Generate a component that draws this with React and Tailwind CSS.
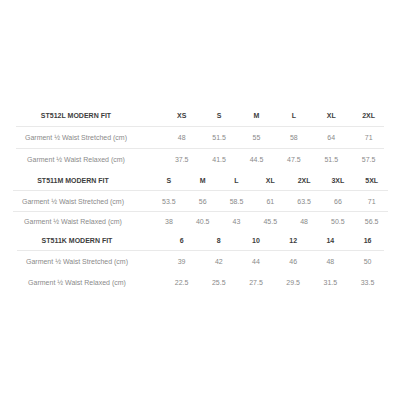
import React from "react";

const tables = [
  {
    left: 16,
    width: 368,
    start: 147,
    col: 37.4,
    cols: "grid-cols-[repeat(6,37.4px)]",
    title: "ST512L MODERN FIT",
    sizes: ["XS", "S", "M", "L", "XL", "2XL"],
    rows: [
      ["Garment ½ Waist Stretched (cm)", ["48", "51.5", "55", "58", "64", "71"]],
      ["Garment ½ Waist Relaxed (cm)", ["37.5", "41.5", "44.5", "47.5", "51.5", "57.5"]],
    ],
    heights: ["h-[22px]", "h-[22px]", "h-[21px]"],
    lines: [true, true, false],
  },
  {
    left: 13,
    width: 375,
    start: 139,
    title: "ST511M MODERN FIT",
    cols: "grid-cols-[repeat(7,33.8px)]",
    sizes: ["S", "M", "L", "XL", "2XL", "3XL", "5XL"],
    rows: [
      ["Garment ½ Waist Stretched (cm)", ["53.5", "56", "58.5", "61", "63.5", "66", "71"]],
      ["Garment ½ Waist Relaxed (cm)", ["38", "40.5", "43", "45.5", "48", "50.5", "56.5"]],
    ],
    heights: ["h-[21px]", "h-[21px]", "h-[19px]"],
    lines: [true, true, false],
  },
  {
    left: 17,
    width: 367,
    start: 146,
    title: "ST511K MODERN FIT",
    cols: "grid-cols-[repeat(6,37.2px)]",
    sizes: ["6", "8", "10", "12", "14", "16"],
    rows: [
      ["Garment ½ Waist Stretched (cm)", ["39", "42", "44", "46", "48", "50"]],
      ["Garment ½ Waist Relaxed (cm)", ["22.5", "25.5", "27.5", "29.5", "31.5", "33.5"]],
    ],
    heights: ["h-[20px]", "h-[21px]", "h-[21px]"],
    lines: [true, false, false],
  },
];

function Row({ t, i, label, values, bold }) {
  return (
    <div
      className={`flex items-center ${t.heights[i]} ${t.lines[i] ? "border-b border-[#e9e9e9]" : ""}`}
      style={{ width: t.width }}
    >
      <div
        className={`w-[120px] shrink-0 text-center whitespace-nowrap ${bold ? "font-bold text-[#3d3d3d]" : "text-[#8a8a8a]"}`}
      >
        {label}
      </div>
      <div className="shrink-0" style={{ width: t.start - 120 }} />
      <div className={`grid ${t.cols} shrink-0`}>
        {values.map((v, k) => (
          <div
            key={k}
            className={`text-center whitespace-nowrap ${bold ? "font-bold text-[#3d3d3d]" : "text-[#8a8a8a]"}`}
          >
            {v}
          </div>
        ))}
      </div>
    </div>
  );
}

export default function App() {
  return (
    <div className="w-[400px] h-[400px] bg-white overflow-hidden pt-[105px] text-[7px] leading-none font-['Liberation_Sans',Arial,sans-serif]">
      {tables.map((t, n) => (
        <div key={n} style={{ marginLeft: t.left }}>
          <Row t={t} i={0} label={t.title} values={t.sizes} bold />
          {t.rows.map((r, i) => (
            <Row key={i} t={t} i={i + 1} label={r[0]} values={r[1]} />
          ))}
        </div>
      ))}
    </div>
  );
}
